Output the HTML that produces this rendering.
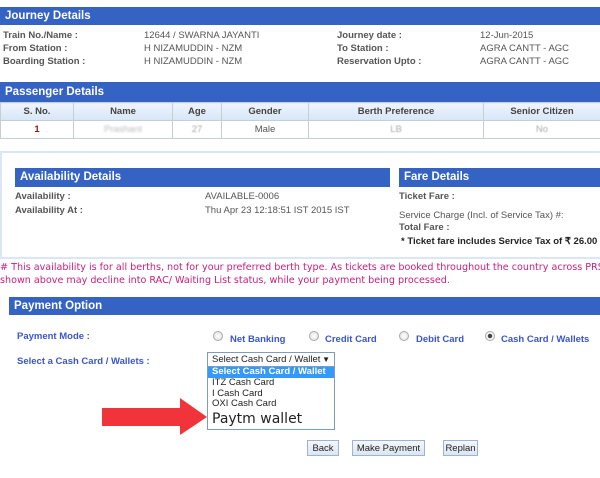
<!DOCTYPE html>
<html><head><meta charset="utf-8"><style>
*{margin:0;padding:0;box-sizing:border-box}
body{width:600px;height:478px;background:#fff;position:relative;overflow:hidden;font-family:"Liberation Sans",Arial,sans-serif;font-size:9.5px;color:#555}
.a{position:absolute;white-space:nowrap}
.bar{position:absolute;background:#3563c4;color:#fff;font-weight:bold;font-size:11.5px;padding-left:5px;line-height:18px}
.l{font-weight:bold;color:#555}
.bl{color:#3a55d0}
td,th{border:1px solid #c8cdd4;text-align:center;font-size:9.5px;height:18px}
th{background:linear-gradient(#eef4fc,#d7e6f7);color:#444}
.radio{position:absolute;width:10px;height:10px;border-radius:50%;border:1px solid #aaa;background:radial-gradient(#fff,#ddd)}
.btn{position:absolute;border:1px solid #9bb3d6;background:linear-gradient(#f5f8fc,#dbe5f2);color:#222;font-size:9.5px;text-align:center;line-height:15px;height:16px}
</style></head><body>
<div class="bar" style="left:0;top:7px;width:600px;height:18px">Journey Details</div>
<div class="a l" style="left:3px;top:30px">Train No./Name :</div>
<div class="a l" style="left:3px;top:43px">From Station :</div>
<div class="a l" style="left:3px;top:56px">Boarding Station :</div>
<div class="a" style="left:144px;top:30px">12644 / SWARNA JAYANTI</div>
<div class="a" style="left:144px;top:43px">H NIZAMUDDIN - NZM</div>
<div class="a" style="left:144px;top:56px">H NIZAMUDDIN - NZM</div>
<div class="a l" style="left:337px;top:30px">Journey date :</div>
<div class="a l" style="left:337px;top:43px">To Station :</div>
<div class="a l" style="left:337px;top:56px">Reservation Upto :</div>
<div class="a" style="left:480px;top:30px">12-Jun-2015</div>
<div class="a" style="left:480px;top:43px">AGRA CANTT - AGC</div>
<div class="a" style="left:480px;top:56px">AGRA CANTT - AGC</div>
<div class="bar" style="left:0;top:82px;width:600px;height:20px;line-height:20px">Passenger Details</div>
<table class="a" style="left:0;top:102px;width:601px;border-collapse:collapse">
<tr><th style="width:73px">S. No.</th><th style="width:99px">Name</th><th style="width:49px">Age</th><th style="width:87px">Gender</th><th style="width:175px">Berth Preference</th><th>Senior Citizen</th></tr>
<tr><td style="color:#8b1a1a;font-weight:bold">1</td><td style="color:#bbb;filter:blur(1px)">Prashant</td><td style="color:#aaa;filter:blur(.6px)">27</td><td>Male</td><td style="color:#aaa;filter:blur(.6px)">LB</td><td style="color:#aaa;filter:blur(.6px)">No</td></tr>
</table>
<div class="a" style="left:0;top:151px;width:602px;height:108px;border:2px solid #dbe6f6"></div>
<div class="bar" style="left:15px;top:168px;width:375px;height:19px;line-height:19px;padding-left:5px">Availability Details</div>
<div class="bar" style="left:399px;top:168px;width:201px;height:19px;line-height:19px">Fare Details</div>
<div class="a l" style="left:15px;top:191px">Availability :</div>
<div class="a l" style="left:15px;top:205px">Availability At :</div>
<div class="a" style="left:205px;top:191px">AVAILABLE-0006</div>
<div class="a" style="left:205px;top:205px">Thu Apr 23 12:18:51 IST 2015 IST</div>
<div class="a l" style="left:399px;top:191px">Ticket Fare :</div>
<div class="a" style="left:399px;top:210px">Service Charge (Incl. of Service Tax) #:</div>
<div class="a l" style="left:399px;top:222px">Total Fare :</div>
<div class="a" style="left:401px;top:236px;font-weight:bold;color:#222">* Ticket fare includes Service Tax of ₹ 26.00</div>
<div class="a" style="left:0;top:262px;color:#c8207a;font-family:'DejaVu Sans',Verdana,sans-serif;font-size:9.6px;line-height:12.5px">
# This availability is for all berths, not for your preferred berth type. As tickets are booked throughout the country across PRS<br>shown above may decline into RAC/ Waiting List status, while your payment being processed.</div>
<div class="bar" style="left:9px;top:297px;width:591px;height:18px">Payment Option</div>
<div class="a l bl" style="left:17px;top:331px">Payment Mode :</div>
<div class="a l bl" style="left:17px;top:356px">Select a Cash Card / Wallets :</div>
<div class="radio" style="left:213px;top:331px"></div><div class="a l bl" style="left:230px;top:334px">Net Banking</div>
<div class="radio" style="left:309px;top:331px"></div><div class="a l bl" style="left:325px;top:334px">Credit Card</div>
<div class="radio" style="left:399px;top:331px"></div><div class="a l bl" style="left:416px;top:334px">Debit Card</div>
<div class="radio" style="left:485px;top:331px;background:radial-gradient(#444 0 2px,#fff 2.5px,#ddd)"></div><div class="a l bl" style="left:501px;top:334px">Cash Card / Wallets</div>
<div class="a" style="left:207px;top:352px;width:128px;height:15px;border:1px solid #7f9db9;background:#fff;color:#222;padding-left:4px;line-height:13px;font-size:9.5px">Select Cash Card / Wallet<span style="position:absolute;right:4px;top:0;font-size:8px">▼</span></div>
<div class="a" style="left:207px;top:366px;width:128px;height:64px;border:1px solid #7f9db9;background:#fff;color:#222;line-height:10.5px;font-size:9.5px">
<div style="background:#3399ff;color:#fff;font-weight:bold;padding-left:4px;height:11px">Select Cash Card / Wallet</div>
<div style="padding-left:4px">ITZ Cash Card</div>
<div style="padding-left:4px">I Cash Card</div>
<div style="padding-left:4px">OXI Cash Card</div>
<div style="padding-left:4px;font-size:14px;line-height:19px;font-family:'DejaVu Sans',sans-serif">Paytm wallet</div>
</div>
<svg class="a" style="left:100px;top:398px" width="108" height="38"><polygon points="2,10 80,10 80,0 107,19 80,37 80,28 2,28" fill="#f0343a"/></svg>
<div class="btn" style="left:307px;top:440px;width:32px">Back</div>
<div class="btn" style="left:352px;top:440px;width:73px">Make Payment</div>
<div class="btn" style="left:443px;top:440px;width:35px">Replan</div>
</body></html>
